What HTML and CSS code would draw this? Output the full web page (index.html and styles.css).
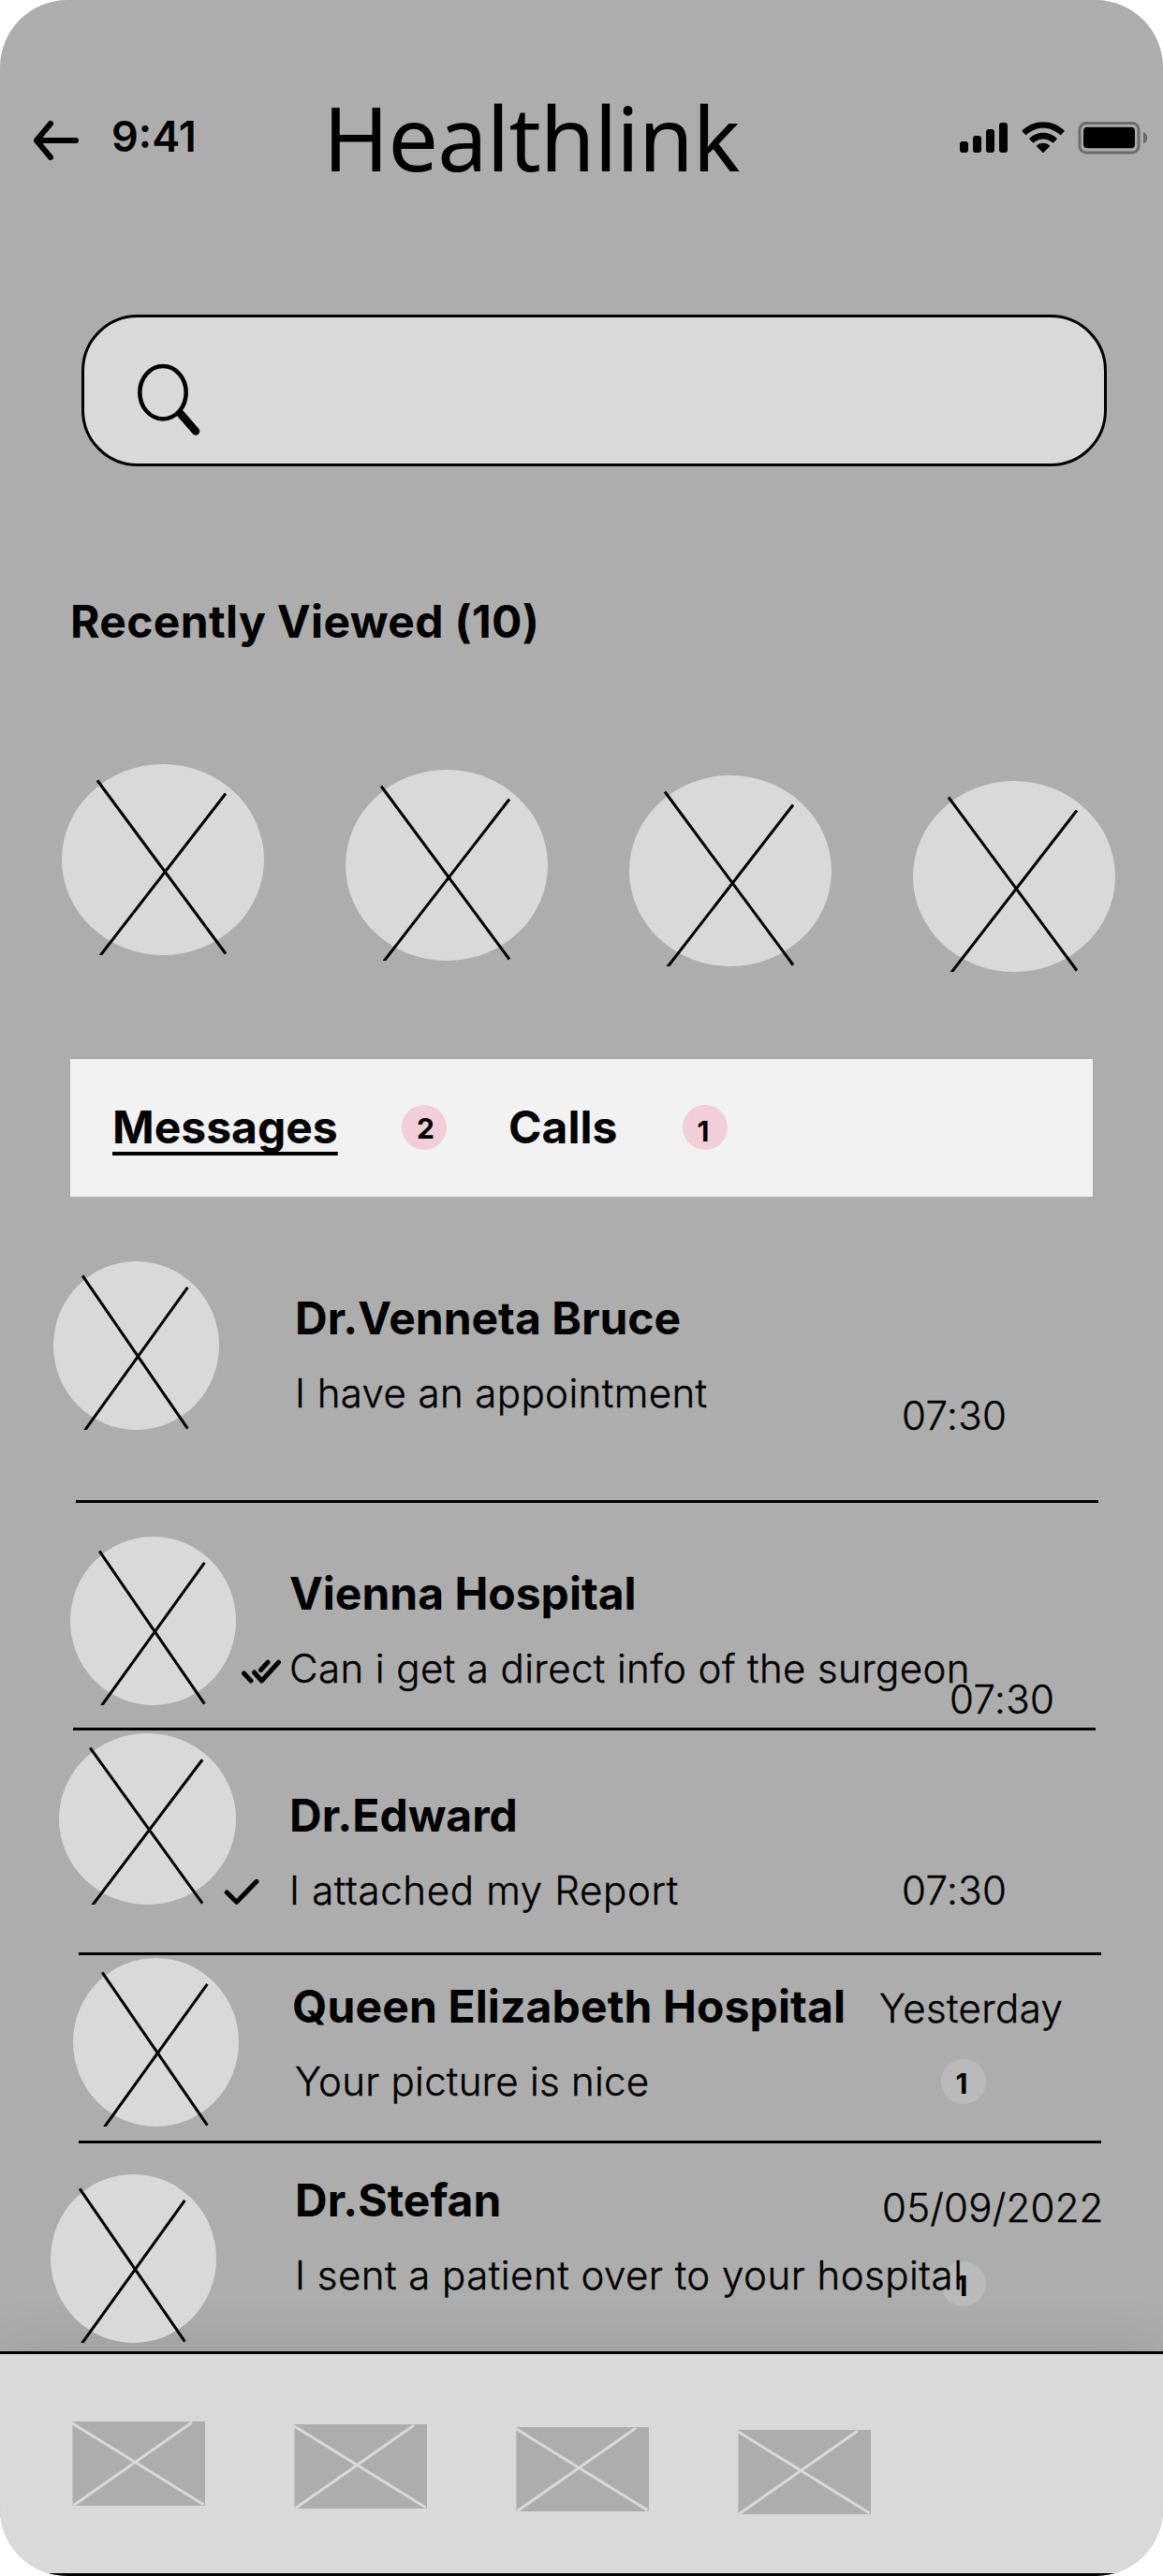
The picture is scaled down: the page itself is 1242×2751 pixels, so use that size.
FILE: index.html
```html
<!DOCTYPE html>
<html lang="en">
<head>
<meta charset="utf-8">
<title>Healthlink</title>
<link rel="stylesheet" href="styles.css">
</head>
<body>
<svg width="0" height="0" class="defs" aria-hidden="true">
  <symbol id="avatar" viewBox="0 0 216 204" preserveAspectRatio="none">
    <ellipse cx="108" cy="102" rx="108" ry="102" fill="#d9d9d9"/>
    <path d="M38 17.5 175 202.500M175 31.500 41 204.500" fill="none" stroke="#000" stroke-width="3" vector-effect="non-scaling-stroke"/>
  </symbol>
  <symbol id="tile" viewBox="0 0 142 90">
    <path d="M.4 0H142V90H.4z" fill="#adadad"/>
    <path d="M0 1.800 140.500 88.800M128 1 1.300 89.800" fill="none" stroke="#d9d9d9" stroke-width="3"/>
  </symbol>
</svg>
<div class="screen">
  <header class="header">
    <svg class="back" width="48" height="42" viewBox="0 0 48 42" fill="none" stroke="#000" stroke-width="6" stroke-linecap="round" stroke-linejoin="round"><path d="M45 21H3M18 3 3 21 18 39"/></svg>
    <span class="clock">9:41</span>
    <h1 class="brand">Healthlink</h1>
    <svg class="status" width="201" height="34" viewBox="0 0 201 34">
      <rect x="0" y="21" width="9" height="12" rx="3"/>
      <rect x="14" y="15" width="9" height="18" rx="3"/>
      <rect x="28" y="8" width="9" height="25" rx="3"/>
      <rect x="42" y="1" width="9" height="32" rx="3"/>
      <path d="M89 6.800c6.700 0 13.100 2.600 18 7.200q.5.500 1 0l3.500-3.600q.5-.5 0-1.100C99 -2.900 79.300-2.900 66.700 9.300q-.5.600 0 1.100l3.500 3.600q.5.500 1 0C75.900 9.400 82.300 6.800 89 6.800z"/>
      <path d="M89 18.500c3.700 0 7.200 1.400 9.900 3.800q.6.500 1.100 0l3.500-3.600q.5-.6 0-1.100c-8.200-7.700-20.800-7.700-29 0q-.5.500 0 1.100l3.500 3.600q.5.500 1.100 0c2.700-2.400 6.200-3.800 9.900-3.800z"/>
      <path d="M95.900 26.400q.5-.6-.1-1.100c-3.900-3.300-9.700-3.300-13.600 0q-.6.500-.1 1.100l6.300 6.300q.6.500 1.200 0z"/>
      <rect x="128" y="1.500" width="63" height="31.500" rx="7" fill="none" stroke="#000" stroke-opacity=".38" stroke-width="3"/>
      <path d="M196 11v12.500c2.600-1.100 4.200-3.500 4.200-6.200S198.600 12.100 196 11z" opacity=".4"/>
      <rect x="132" y="5.700" width="55" height="22.500" rx="4"/>
    </svg>
  </header>

  <div class="search">
    <svg width="68" height="78" viewBox="0 0 68 78" fill="none" stroke="#000"><ellipse cx="27" cy="28.200" rx="24.700" ry="28.200" stroke-width="4.500"/><path d="m45.500 50.500 16.500 19" stroke-width="8.500" stroke-linecap="round"/></svg>
  </div>

  <h2 class="heading">Recently Viewed (10)</h2>

  <div class="recent">
    <svg><use href="#avatar"/></svg>
    <svg><use href="#avatar"/></svg>
    <svg><use href="#avatar"/></svg>
    <svg><use href="#avatar"/></svg>
  </div>

  <nav class="tabs">
    <span class="tab tab-messages">Messages</span><span class="badge badge-two">2</span>
    <span class="tab tab-calls">Calls</span><span class="badge">1</span>
  </nav>

  <main class="chats">
    <article class="chat chat-venneta">
      <svg class="avatar"><use href="#avatar"/></svg>
      <div class="body"><h3>Dr.Venneta Bruce</h3><p>I have an appointment</p></div>
      <div class="meta"><time>07:30</time></div>
    </article>
    <hr class="rule-1">
    <article class="chat chat-vienna">
      <svg class="avatar"><use href="#avatar"/></svg>
      <svg class="tick" width="42" height="24" viewBox="0 0 42 24"><path d="m2.500 14 7.500 8M13.500 13l8 9L39.500 2.200M20.500 10.500l7.500-8.300"/></svg>
      <div class="body"><h3>Vienna Hospital</h3><p>Can i get a direct info of the surgeon</p></div>
      <div class="meta"><time>07:30</time></div>
    </article>
    <hr class="rule-2">
    <article class="chat chat-edward">
      <svg class="avatar"><use href="#avatar"/></svg>
      <svg class="tick" width="36" height="27" viewBox="0 0 36 27"><path d="m2.300 14 10.400 10.300L34 2.300"/></svg>
      <div class="body"><h3>Dr.Edward</h3><p>I attached my Report</p></div>
      <div class="meta"><time>07:30</time></div>
    </article>
    <hr class="rule-3">
    <article class="chat chat-queen">
      <svg class="avatar"><use href="#avatar"/></svg>
      <div class="body"><h3>Queen Elizabeth Hospital</h3><p>Your picture is nice</p></div>
      <div class="meta"><time>Yesterday</time><span class="badge badge-muted">1</span></div>
    </article>
    <hr class="rule-3">
    <article class="chat chat-stefan">
      <svg class="avatar"><use href="#avatar"/></svg>
      <div class="body"><h3>Dr.Stefan</h3><p>I sent a patient over to your hospital</p></div>
      <div class="meta"><time>05/09/2022</time><span class="badge badge-muted">1</span></div>
    </article>
  </main>

  <footer class="dock">
    <svg><use href="#tile"/></svg>
    <svg><use href="#tile"/></svg>
    <svg><use href="#tile"/></svg>
    <svg><use href="#tile"/></svg>
  </footer>
</div>
</body>
</html>
```
FILE: styles.css
```css
* { box-sizing: border-box; }
body { margin: 0; background: #fff; color: #000; font-family: Inter, "Liberation Sans", sans-serif; }
.defs { display: block; }
h1, h2, h3, p { margin: 0; white-space: nowrap; }
svg { display: block; flex: none; overflow: visible; }

.screen { width: 1242px; height: 2751px; overflow: hidden; border-radius: 72px; background: #adadad; }

.header { display: flex; align-items: flex-start; height: 336px; padding-left: 36px; }
.back { margin-top: 129px; }
.clock { width: 226px; margin: 119px 0 0 35px; font-size: 45px; line-height: 54px; font-weight: 600; }
.brand { width: 680px; margin-top: 81px; font-family: "Noto Sans", sans-serif; font-weight: 400; font-size: 95px; line-height: 130px; letter-spacing: -0.85px; }
.status { margin-top: 130px; }

.search { width: 1095px; height: 162px; margin-left: 87px; padding: 52px 0 0 57px; border: 3px solid #000; border-radius: 60px; background: #d9d9d9; }

.heading, h3, .tab { font-size: 48px; line-height: 58px; font-weight: 700; }
.heading { margin: 137px 0 0 75px; letter-spacing: 0.35px; }

.recent { display: flex; gap: 87px; height: 222px; margin: 123px 0 0 66px; }
.recent svg { width: 216px; height: 204px; }
.recent svg:nth-child(2) { margin-top: 6px; }
.recent svg:nth-child(3) { margin-top: 12px; }
.recent svg:nth-child(4) { margin-top: 18px; }

.tabs { display: flex; align-items: flex-start; width: 1092px; height: 147px; margin: 93px 0 0 75px; padding: 44px 0 0 45px; background: #f2f2f2; }
.tab-messages { width: 309px; text-decoration: underline 4px; text-underline-offset: 9px; text-decoration-skip-ink: none; }
.tab-calls { width: 186px; margin-left: 66px; }
.badge { width: 48px; height: 48px; margin-top: 5px; padding: 4px 4px 0 0; border-radius: 50%; background: #f2ced9; font-size: 30px; line-height: 48px; font-weight: 700; text-align: center; }
.badge-two { padding: 1px 0 0 3px; }
.badge-muted { padding-top: 2px; background: #bababa; }

.chat { display: flex; align-items: flex-start; }
.chat p, .chat time { font-size: 42px; line-height: 51px; font-weight: 300; letter-spacing: 0.4px; -webkit-text-stroke: 0.4px #000; white-space: nowrap; }
.chat p { margin-top: 25px; }
.avatar { width: 177px; height: 180px; }
.body, .meta { flex: none; }
.meta { display: flex; flex-direction: column; }
.tick { fill: none; stroke: #000; stroke-width: 5; stroke-linecap: round; stroke-linejoin: round; }
hr { width: 1092px; height: 3px; margin: 0; border: 0; background: #000; }
.rule-1 { margin-left: 81px; }
.rule-2 { margin-left: 78px; }
.rule-3 { margin-left: 84px; }

.chat-venneta { height: 324px; padding-left: 57px; }
.chat-venneta .avatar { margin-top: 69px; }
.chat-venneta .body { width: 648px; margin: 101px 0 0 81px; }
.chat-venneta .meta { margin-top: 208px; }

.chat-vienna { height: 240px; padding-left: 75px; }
.chat-vienna .avatar { margin-top: 36px; }
.chat-vienna .tick { margin: 168px 9px 0 6px; }
.chat-vienna .body { width: 705px; margin-top: 68px; }
.chat-vienna .meta { margin-top: 184px; }

.chat-edward { height: 237px; padding-left: 63px; }
.chat-edward .avatar { width: 189px; height: 183px; margin-top: 3px; }
.chat-edward .tick { margin: 159px 33px 0 -12px; }
.chat-edward .body { width: 654px; margin-top: 62px; }
.chat-edward p { letter-spacing: 0.65px; }
.chat-edward .meta { margin-top: 145px; }

.chat-queen { height: 198px; padding-left: 78px; }
.chat-queen .avatar { margin-top: 3px; }
.chat-queen .body { width: 627px; margin: 26px 0 0 57px; }
.chat-queen h3 { letter-spacing: 0.13px; }
.chat-queen p { padding-left: 3px; letter-spacing: 0.25px; }
.chat-queen .meta { margin-top: 31px; }
.chat-queen .badge { margin: 29px 0 0 66px; }

.chat-stefan { position: relative; z-index: 1; height: 222px; padding-left: 54px; }
.chat-stefan .avatar { margin-top: 33px; }
.chat-stefan .body { z-index: 1; width: 627px; margin: 32px 0 0 84px; }
.chat-stefan p { letter-spacing: 0.48px; }
.chat-stefan .meta { margin-top: 43px; }
.chat-stefan time { letter-spacing: 0.2px; }
.chat-stefan .badge { margin: 32px 0 0 63px; }

.dock { display: flex; gap: 95px; height: 240px; padding: 72px 0 0 77px; border: solid #000; border-width: 3px 0; background: #d9d9d9; box-shadow: 0 0 60px rgba(0, 0, 0, .12); }
.dock svg { width: 142px; height: 90px; }
.dock svg:nth-child(2) { margin-top: 3px; }
.dock svg:nth-child(3) { margin-top: 6px; }
.dock svg:nth-child(4) { margin-top: 9px; }
```
